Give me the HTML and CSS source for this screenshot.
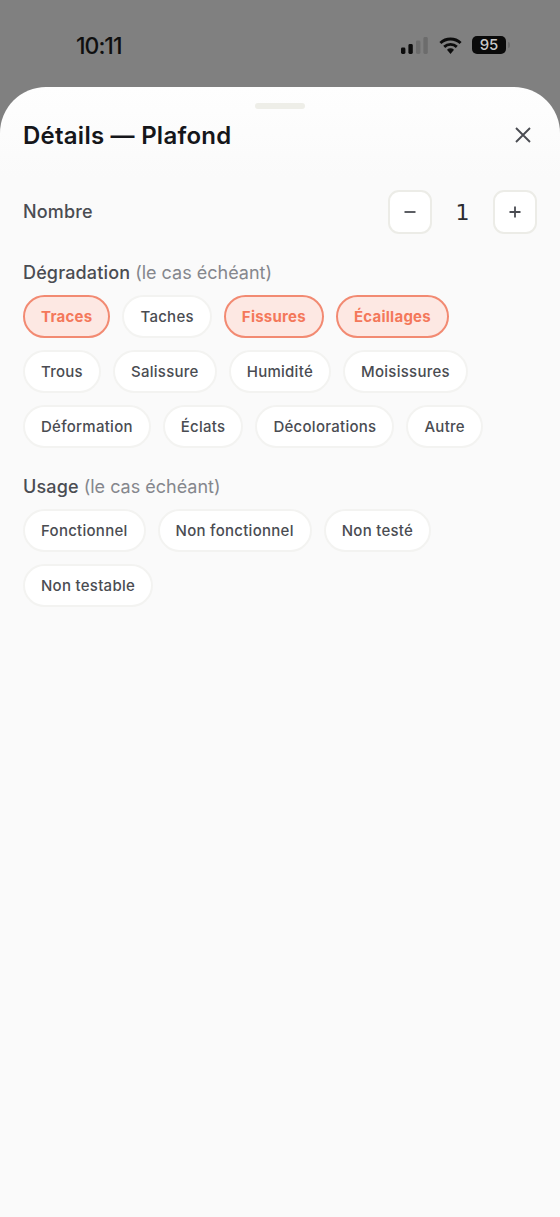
FILE: index.html
```html
<!doctype html>
<html lang="fr">
<head>
<meta charset="utf-8">
<title>Détails — Plafond</title>
<link rel="stylesheet" href="styles.css">
</head>

<body>
<div class="status-bar">
	<span class="status-time">10:11</span>
	<div class="status-icons">
		<svg class="icon-signal" width="27" height="17" viewBox="0 0 27 17">
			<rect x="0" y="10.5" width="4.4" height="6.5" rx="1.4" fill="#0c0c0c"/>
			<rect x="7.4" y="7" width="4.4" height="10" rx="1.4" fill="#0c0c0c"/>
			<rect x="15" y="3.5" width="4.4" height="13.5" rx="1.4" fill="#6c6c6c"/>
			<rect x="22.4" y="0" width="4.4" height="17" rx="1.4" fill="#6c6c6c"/>
		</svg>
		<svg class="icon-wifi" width="23" height="17" viewBox="0 0 23 17">
			<path d="M1.4 6a14.6 14.6 0 0 1 20.2 0" fill="none" stroke="#0c0c0c" stroke-width="2.9"/>
			<path d="M5.2 9.9a9.2 9.2 0 0 1 12.6 0" fill="none" stroke="#0c0c0c" stroke-width="2.9"/>
			<path d="M8 12.8a5 5 0 0 1 7 0l-3.5 4.2z" fill="#0c0c0c"/>
		</svg>
		<div class="battery"><span class="battery-level">95</span></div>
	</div>
</div>

<div class="sheet">
	<div class="sheet-handle"></div>
	<div class="sheet-header">
		<h1 class="sheet-title">Détails — Plafond</h1>
		<svg class="icon-close" width="16" height="16" viewBox="0 0 16 16">
			<path d="M1 1l14 14M15 1L1 15" fill="none" stroke="#4a4c52" stroke-width="1.9"/>
		</svg>
	</div>

	<div class="count-row">
		<span class="field-label">Nombre</span>
		<div class="stepper">
			<div class="stepper-btn">
				<svg width="12" height="12" viewBox="0 0 12 12"><path d="M0.5 6h11" fill="none" stroke="#4a4c52" stroke-width="1.8"/></svg>
			</div>
			<span class="stepper-value">1</span>
			<div class="stepper-btn">
				<svg width="12" height="12" viewBox="0 0 12 12"><path d="M0.5 6h11M6 0.5v11" fill="none" stroke="#4a4c52" stroke-width="1.8"/></svg>
			</div>
		</div>
	</div>

	<div class="section">
		<div class="field-label">Dégradation <span class="field-hint">(le cas échéant)</span></div>
		<div class="chips">
			<span class="chip active">Traces</span>
			<span class="chip">Taches</span>
			<span class="chip active">Fissures</span>
			<span class="chip active">Écaillages</span>
			<span class="chip">Trous</span>
			<span class="chip">Salissure</span>
			<span class="chip">Humidité</span>
			<span class="chip">Moisissures</span>
			<span class="chip">Déformation</span>
			<span class="chip">Éclats</span>
			<span class="chip">Décolorations</span>
			<span class="chip">Autre</span>
		</div>
	</div>

	<div class="section">
		<div class="field-label">Usage <span class="field-hint">(le cas échéant)</span></div>
		<div class="chips">
			<span class="chip">Fonctionnel</span>
			<span class="chip">Non fonctionnel</span>
			<span class="chip">Non testé</span>
			<span class="chip">Non testable</span>
		</div>
	</div>
</div>
</body>
</html>
```

FILE: styles.css
```css
html, body { height: 100%; }
body { margin: 0; display: flex; flex-direction: column; background-color: #808080; font: 15px/1.2 Inter, "Liberation Sans", sans-serif; color: #4a4c52; }
.status-bar { height: 87px; flex: none; box-sizing: border-box; padding: 32px 54px 0 76px; display: flex; justify-content: space-between; align-items: flex-start; }
.status-time { font-size: 23px; line-height: 28px; font-weight: 500; letter-spacing: -1px; color: #0f0f0f; }
.status-icons { display: flex; align-items: center; gap: 10.5px; height: 26px; }
.battery { position: relative; width: 34px; height: 18px; border-radius: 5px; background-color: #0a0a0a; display: flex; align-items: center; justify-content: center; }
.battery::after { content: ""; position: absolute; left: 36px; top: 6px; width: 2px; height: 6px; border-radius: 0 2px 2px 0; background-color: #6c6c6c; }
.battery-level { font-size: 15px; font-weight: 500; color: #c8c8c8; }
.sheet { flex: 1; box-sizing: border-box; padding: 16px 23px 0; border-radius: 46px 46px 0 0; background: linear-gradient(#fefefe, #fafafa 90px); }
.sheet-handle { width: 50px; height: 6px; margin: 0 auto; border-radius: 3px; background-color: #eeeee8; }
.sheet-header { height: 28px; margin-top: 13px; display: flex; justify-content: space-between; align-items: center; }
.sheet-title { margin: 0; font-size: 24px; line-height: 28px; font-weight: 600; letter-spacing: 0.24px; color: #15161a; }
.icon-close { margin-right: 6px; margin-top: -2px; }
.count-row { margin-top: 40px; display: flex; justify-content: space-between; align-items: center; }
.field-label { font-size: 18px; line-height: 22px; font-weight: 500; letter-spacing: 0.15px; color: #4a4c52; }
.field-hint { font-weight: 400; letter-spacing: 0; color: #85878d; }
.stepper { display: flex; align-items: center; }
.stepper-btn { width: 40px; height: 40px; border: 2px solid #ecece7; border-radius: 11px; background-color: #fff; display: flex; align-items: center; justify-content: center; }
.stepper-value { width: 61px; padding-top: 2px; text-align: center; font-family: "DejaVu Sans", sans-serif; font-size: 22px; color: #2a2b2f; }
.section { margin-top: 28px; }
.chips { margin-top: 11px; display: flex; flex-wrap: wrap; gap: 12px; }
.chip { height: 39px; line-height: 40px; padding: 0 16px; border: 2px solid #f3f3f1; border-radius: 22px; background-color: #fff; font-weight: 450; color: #4a4c52; letter-spacing: 0.27px; }
.chip.active { border-color: #f28a72; background-color: #fde8e3; font-weight: 700; color: #f4785b; letter-spacing: 0.25px; }
```
